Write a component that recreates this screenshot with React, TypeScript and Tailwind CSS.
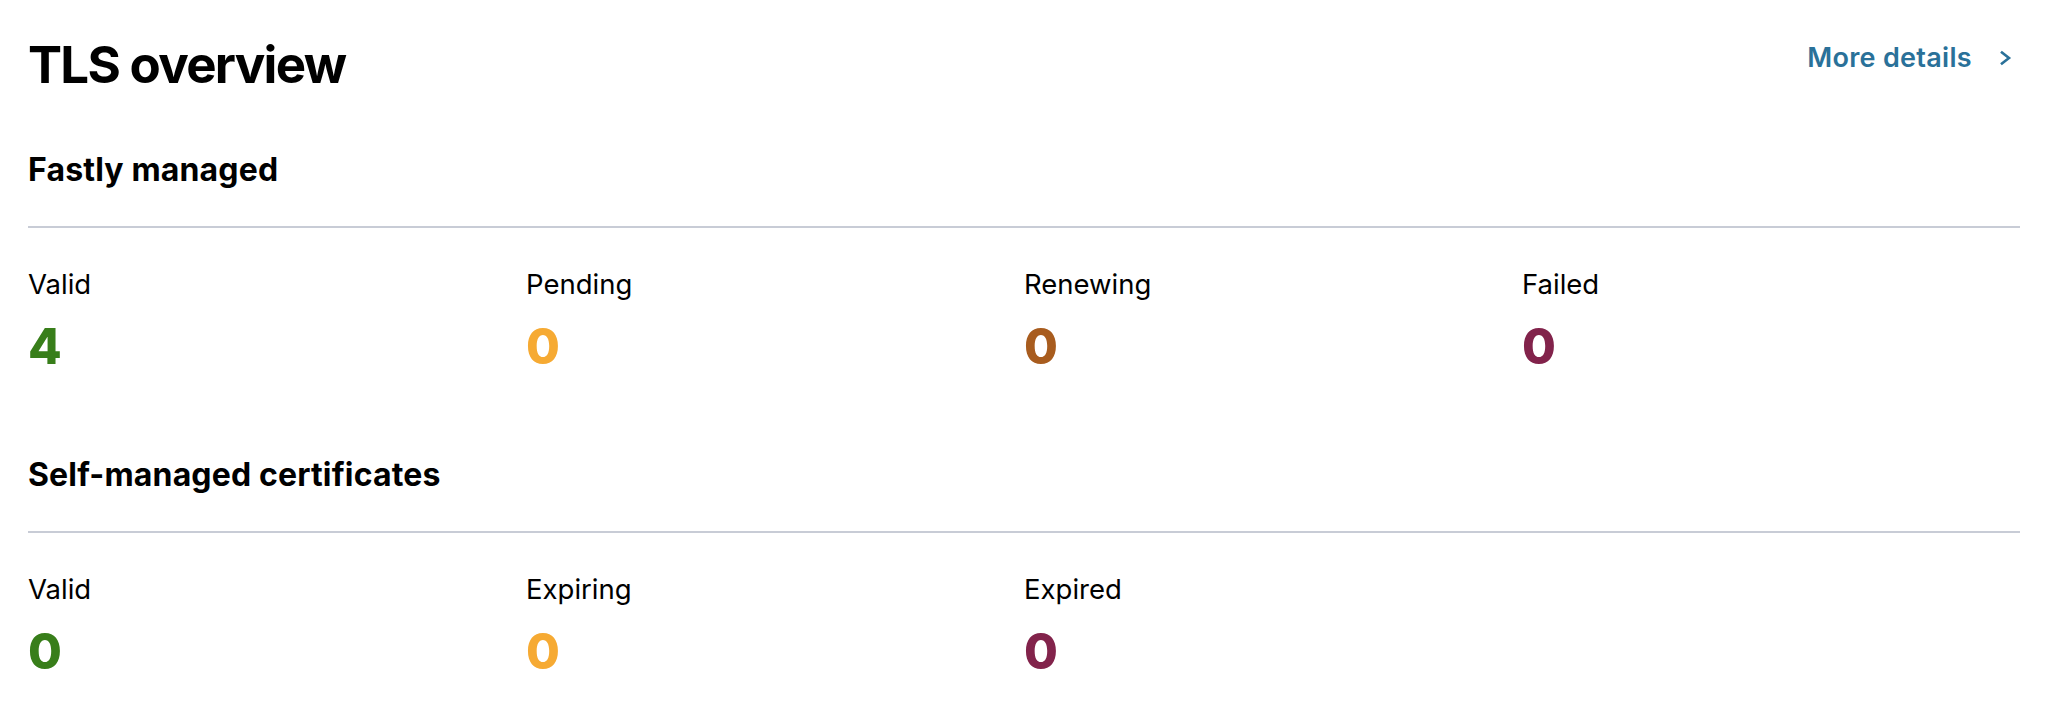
import React from "react";

type Stat = { label: string; value: number; color: string };

const fastly: Stat[] = [
  { label: "Valid", value: 4, color: "text-[#387e1a]" },
  { label: "Pending", value: 0, color: "text-[#f6aa33]" },
  { label: "Renewing", value: 0, color: "text-[#a85c1e]" },
  { label: "Failed", value: 0, color: "text-[#82234b]" },
];

const selfManaged: Stat[] = [
  { label: "Valid", value: 0, color: "text-[#387e1a]" },
  { label: "Expiring", value: 0, color: "text-[#f6aa33]" },
  { label: "Expired", value: 0, color: "text-[#82234b]" },
];

function Section({ title, stats, first }: { title: string; stats: Stat[]; first?: boolean }) {
  return (
    <section className={first ? "mt-[55px]" : "mt-[80px]"}>
      <h2 className="text-[32px] leading-[40px] font-bold text-black tracking-[0.15px]">{title}</h2>
      <div className="mt-[36px] h-[2px] bg-[#c8ccd6]" />
      <div className="grid grid-cols-4 mt-[40px]">
        {stats.map((s) => (
          <div key={s.label} className="flex flex-col">
            <div className="text-[27.5px] leading-[32px] text-black">{s.label}</div>
            <div className={`mt-[19px] text-[49px] leading-[56px] font-extrabold ${s.color}`}>{s.value}</div>
          </div>
        ))}
      </div>
    </section>
  );
}

export default function App() {
  return (
    <div
      className="w-full min-h-[706px] bg-white pl-[28px] pr-[38px] pt-[35px]"
      style={{ fontFamily: "Inter, 'Noto Sans', sans-serif" }}
    >
      <header className="flex items-start justify-between">
        <h1 className="text-[51px] leading-[60px] font-bold text-black tracking-[-1.7px]">TLS overview</h1>
        <a href="#" className="mt-[7px] flex items-center text-[27px] leading-[32px] font-semibold tracking-[0.3px] text-[#2a7199]">
          <span>More details</span>
          <svg width="14" height="16" viewBox="0 0 14 16" className="ml-[27px] mr-[7px]" fill="none">
            <polyline points="3,2.5 10,8 3,13.5" stroke="#2a7199" strokeWidth="2.6" strokeLinecap="square" strokeLinejoin="miter" />
          </svg>
        </a>
      </header>
      <Section title="Fastly managed" stats={fastly} first />
      <Section title="Self-managed certificates" stats={selfManaged} />
    </div>
  );
}
